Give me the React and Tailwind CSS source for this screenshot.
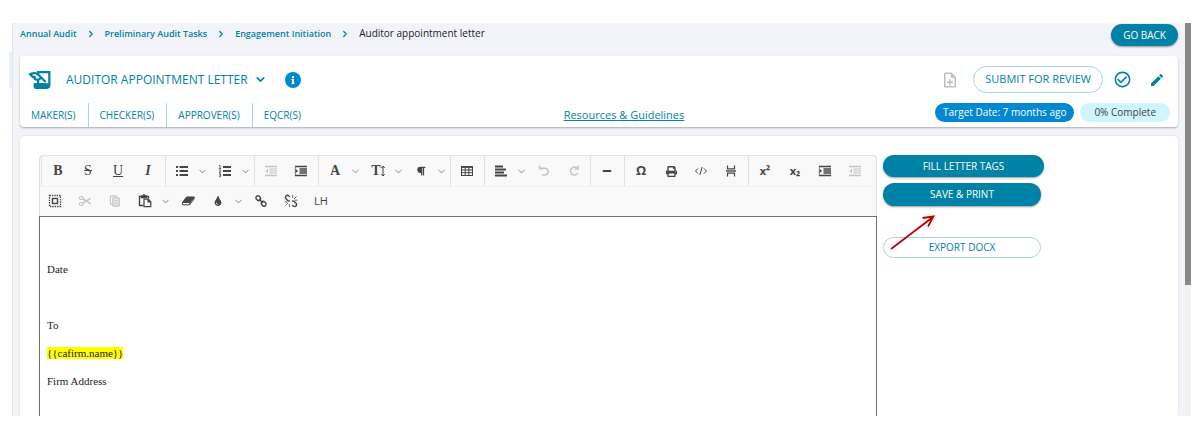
import React, { useState } from "react";
import {
  FaInfo,
  FaMinus,
  FaParagraph,
  FaPrint,
  FaTint,
} from "react-icons/fa";
import {
  MdCheckCircleOutline,
  MdEdit,
  MdOutlineNoteAdd,
} from "react-icons/md";
import { ChevronDown, ChevronRight } from "lucide-react";

const BREADCRUMBS = [
  "Annual Audit",
  "Preliminary Audit Tasks",
  "Engagement Initiation",
];

const ROLES = ["MAKER(S)", "CHECKER(S)", "APPROVER(S)", "EQCR(S)"];

const Svg = ({ children, size = 14, width = 1.2 }) => (
  <svg
    width={size}
    height={size}
    viewBox="0 0 14 14"
    fill="none"
    stroke="currentColor"
    strokeWidth={width}
  >
    {children}
  </svg>
);

const Letter = ({ children, className = "font-bold" }) => (
  <span className={`font-['Liberation_Serif',serif] text-sm leading-4 ${className}`}>
    {children}
  </span>
);

const LetterLogo = () => (
  <svg width="23" height="20" viewBox="1 3.5 20.5 17" fill="currentColor">
    <path d="M9 4v1.380c-.83-.33-1.720-.5-2.610-.5-1.790 0-3.580.680-4.950 2.050l3.330 3.330h1.110v1.110c.86.86 1.980 1.310 3.110 1.360V15H6v3c0 1.100.9 2 2 2h10c1.660 0 3-1.340 3-3V4H9zm-1.110 6.410V8.260H5.610L4.570 7.220a5.070 5.070 0 0 1 1.820-.34c1.340 0 2.590.52 3.540 1.460l1.410 1.410-.2.2a2.700 2.700 0 0 1-1.920.8c-.47 0-.93-.12-1.330-.34zM19 17c0 .55-.45 1-1 1s-1-.45-1-1v-2h-6v-2.590c.57-.23 1.100-.57 1.560-1.030l.2-.2L15.590 14H17v-1.410l-6-5.970V6h8v11z" />
    <path d="M7 15h12.500v3l-1.500 1H8z" />
  </svg>
);

const BulletListIcon = () => (
  <Svg width={2}>
    <path d="M1 3h2M1 7h2M1 11h2M4.500 3H13M4.500 7H13M4.500 11H13" />
  </Svg>
);

const OrderedListIcon = () => (
  <Svg>
    <path d="M5 3h8M5 7h8M5 11h8" strokeWidth="1.8" />
    <path d="M1 1.500h1v3M.8 4.500h2.400M1 6h1.600v1L1 8.300h2M1 9.800h1.600v3H1M1.400 11.300h1.200" strokeWidth=".8" />
  </Svg>
);

const IndentIcon = () => (
  <Svg>
    <path d="M1 2.500h12M1 11.500h12" strokeWidth="1.600" />
    <path d="M5.500 5H13M5.500 7H13M5.500 9H13" strokeWidth="1.500" />
    <path d="M1.500 4.800v4.400L4 7z" fill="currentColor" stroke="none" />
    <path d="M1.300 2.500v9" strokeWidth=".6" />
  </Svg>
);

const OutdentIcon = () => (
  <Svg>
    <path d="M1 2.500h12M1 11.500h12" strokeWidth="1.400" />
    <path d="M5.500 5H13M5.500 7H13M5.500 9H13" strokeWidth="1.200" />
    <path d="M4 4.800v4.400L1.500 7z" fill="currentColor" stroke="none" />
  </Svg>
);

const TableIcon = () => (
  <Svg width={1}>
    <rect x="1.500" y="2.500" width="11" height="9" />
    <path d="M1.500 3h11" strokeWidth="1.800" />
    <path d="M1.500 6h11M1.500 8.700h11M5.200 2.500v9M8.800 2.500v9" />
  </Svg>
);

const AlignIcon = () => (
  <Svg width={1.8}>
    <path d="M1 2.500h8M1 5.500h11M1 8.500h9M1 11.500h12" />
  </Svg>
);

const LineHeightIcon = () => (
  <span className="flex items-center">
    <Letter>T</Letter>
    <svg width="4" height="12" viewBox="0 0 4 12" fill="none" stroke="currentColor" strokeWidth="1">
      <path d="M2 1v10M.3 3 2 1l1.700 2M.3 9 2 11l1.700-2" />
    </svg>
  </span>
);

const UndoIcon = () => (
  <Svg width={1.5}>
    <path d="M3 4.200h4.800a3.400 3.400 0 1 1 0 6.800H5" />
    <path d="M2.600 1.500v3.200h3.600" />
  </Svg>
);

const RedoIcon = () => (
  <Svg width={1.5}>
    <path d="M10.400 4.300A4 4 0 1 0 11 9" />
    <path d="M11.300 1.500v3.400H7.800" />
  </Svg>
);

const SourceIcon = () => (
  <Svg width={1}>
    <path d="M4 4.500 1.500 7 4 9.500M10 4.500 12.500 7 10 9.500M8.200 3 5.800 11" />
  </Svg>
);

const PageBreakIcon = () => (
  <Svg>
    <path d="M3.500 1.500v3.300h7V1.500M3.500 12.500V9.200h7v3.300" />
    <path d="M2 7h10" strokeWidth="1.400" />
  </Svg>
);

const SelectAllIcon = () => (
  <Svg>
    <rect x="1.500" y="1.500" width="11" height="11" strokeDasharray="1.400 1" strokeWidth="1.300" />
    <rect x="4.500" y="4.500" width="5" height="5" strokeWidth="1.400" />
  </Svg>
);

const CutIcon = () => (
  <Svg>
    <ellipse cx="3.200" cy="4" rx="2" ry="1.500" />
    <ellipse cx="3.200" cy="10" rx="2" ry="1.500" />
    <path d="m5 5 7.600 4.600M5 9l7.600-4.600" strokeWidth="1.500" />
  </Svg>
);

const CopyIcon = () => (
  <Svg>
    <path d="M4.500 10.300H3.300a1 1 0 0 1-1-1V2.800a1 1 0 0 1 1-1h4.500a1 1 0 0 1 1 1" />
    <rect x="4.800" y="3.800" width="6.400" height="8.400" rx=".8" fill="currentColor" fillOpacity=".25" />
    <path d="M6.300 6.500h3.400M6.300 8.300h3.400M6.300 10.100h3.400" strokeWidth=".8" />
  </Svg>
);

const PasteIcon = () => (
  <Svg>
    <path d="M5.500 11.500h-4v-9h2M8.500 2.500h2v2" strokeWidth="1.400" />
    <path d="M3.500 3.600V1.800h1.300L6 .6l1.200 1.200h1.300v1.800z" fill="currentColor" />
    <path d="M6 5.200h4.200l2.600 2.500v5H6zM10 5.200v2.700h2.800" strokeWidth="1.200" />
  </Svg>
);

const EraserIcon = () => (
  <Svg width={1}>
    <path d="M5.500 3h7.800L9.200 8.500H1.500z" fill="currentColor" />
    <path d="M1.500 8.500v2.300h7L13 5.200V3M9 8.500l-.5 2.300" />
  </Svg>
);

const LinkIcon = () => (
  <Svg width={1.4}>
    <rect x="1.800" y="2.200" width="5" height="4" rx="1.900" transform="rotate(45 4.300 4.200)" />
    <rect x="7.200" y="7.800" width="5" height="4" rx="1.900" transform="rotate(45 9.700 9.800)" />
    <path d="m5 5 4 4" />
  </Svg>
);

const UnlinkIcon = () => (
  <Svg width={1.3}>
    <path d="M5.800 2.800 4.900 2A2 2 0 0 0 2 4.800l1.700 1.700a2 2 0 0 0 2.400.3M8.200 11.200l.9.800A2 2 0 0 0 12 9.200l-1.700-1.700a2 2 0 0 0-2.400-.3" />
    <path d="M8.600 4V1M10 5l2.600-2.600M10.500 6.200h3M5.400 10v3M4 9l-2.600 2.600M3.500 7.900h-3" strokeWidth=".8" />
  </Svg>
);

const TOOLBAR_GROUPS = [
  [
    { label: "Bold", icon: <Letter>B</Letter> },
    { label: "Strikethrough", icon: <Letter className="line-through">S</Letter> },
    { label: "Underline", icon: <Letter className="underline">U</Letter> },
    { label: "Italic", icon: <Letter className="font-bold italic">I</Letter> },
  ],
  [
    { label: "Bullet list", icon: <BulletListIcon />, menu: true },
    { label: "Numbered list", icon: <OrderedListIcon />, menu: true },
  ],
  [
    { label: "Outdent", icon: <OutdentIcon />, disabled: true },
    { label: "Indent", icon: <IndentIcon /> },
  ],
  [
    { label: "Font", icon: <Letter>A</Letter>, menu: true },
    { label: "Font size", icon: <LineHeightIcon />, menu: true },
    { label: "Paragraph", icon: <FaParagraph size={10} />, menu: true },
  ],
  [{ label: "Table", icon: <TableIcon /> }],
  [
    { label: "Align", icon: <AlignIcon />, menu: true },
    { label: "Undo", icon: <UndoIcon />, disabled: true },
    { label: "Redo", icon: <RedoIcon />, disabled: true },
  ],
  [{ label: "Horizontal line", icon: <FaMinus size={10} /> }],
  [
    { label: "Symbol", icon: <span className="text-[13px] font-bold">Ω</span> },
    { label: "Print", icon: <FaPrint size={11} /> },
    { label: "Source", icon: <SourceIcon /> },
    { label: "Page break", icon: <PageBreakIcon /> },
  ],
  [
    {
      label: "Superscript",
      icon: <span className="text-[11px] font-bold">x²</span>,
    },
    {
      label: "Subscript",
      icon: <span className="text-[11px] font-bold">x₂</span>,
    },
    { label: "Indent first line", icon: <IndentIcon /> },
    { label: "Outdent first line", icon: <OutdentIcon />, disabled: true },
  ],
];

const CLIPBOARD_TOOLS = [
  { label: "Select all", icon: <SelectAllIcon /> },
  { label: "Cut", icon: <CutIcon />, disabled: true },
  { label: "Copy", icon: <CopyIcon />, disabled: true },
  { label: "Paste", icon: <PasteIcon />, menu: true },
  { label: "Clear format", icon: <EraserIcon /> },
  { label: "Color", icon: <FaTint size={10} />, menu: true },
  { label: "Link", icon: <LinkIcon /> },
  { label: "Unlink", icon: <UnlinkIcon /> },
  { label: "Letterhead", icon: <span className="text-[11px]">LH</span> },
];

const ToolButton = ({ label, icon, menu, disabled }) => (
  <>
    <button
      aria-label={label}
      disabled={disabled}
      className="flex h-[30px] w-[30px] items-center justify-center hover:bg-gray-200 disabled:text-[#c4c4c4]"
    >
      {icon}
    </button>
    {menu && (
      <button
        aria-label={`${label} options`}
        className="flex h-[30px] w-[13px] items-center text-[#808080]"
      >
        <ChevronDown size={11} strokeWidth={2} />
      </button>
    )}
  </>
);

const Toolbar = () => (
  <div className="rounded-t border border-b-0 border-[#e2e2e2] bg-[#f9f9f9] text-[#454545]">
    <div className="flex flex-wrap pl-px shadow-[0_1px_0_#f2f2f2]">
      {TOOLBAR_GROUPS.map((group, i) => (
        <div
          key={i}
          className={`flex border-l border-[#e2e2e2] pl-px ${
            group.some((tool) => tool.menu) ? "pr-px" : "pr-[2px]"
          }`}
        >
          {group.map((tool) => (
            <ToolButton key={tool.label} {...tool} />
          ))}
        </div>
      ))}
    </div>
    <div className="flex flex-wrap">
      {CLIPBOARD_TOOLS.map((tool) => (
        <ToolButton key={tool.label} {...tool} />
      ))}
    </div>
  </div>
);

const Header = () => (
  <header className="rounded bg-white text-[#0082a6] shadow-[0_1px_2px_rgba(0,0,0,0.3)]">
    <div className="flex h-[47px] items-center pr-[13px] pl-2">
      <LetterLogo />
      <h1 className="ml-[15px] text-xs">AUDITOR APPOINTMENT LETTER</h1>
      <button aria-label="Change letter" className="ml-[6px]">
        <ChevronDown size={13} strokeWidth={3} />
      </button>
      <button
        aria-label="Information"
        className="ml-[18px] flex h-4 w-4 items-center justify-center rounded-full bg-[#0288d1] text-white"
      >
        <FaInfo size={8} />
      </button>
      <div className="ml-auto flex items-center">
        <button aria-label="Add note" disabled className="text-[#bdbdbd]">
          <MdOutlineNoteAdd size={18} />
        </button>
        <button className="ml-[14px] h-[27px] rounded-full border border-[#a6d5e1] px-[11px] text-[11px]">
          SUBMIT FOR REVIEW
        </button>
        <button aria-label="Mark complete" className="ml-[10px]">
          <MdCheckCircleOutline size={19} />
        </button>
        <button aria-label="Edit" className="ml-[17px]">
          <MdEdit size={16} />
        </button>
      </div>
    </div>
    <div className="flex h-6 items-center justify-between text-[10px]">
      <div className="flex self-stretch">
        {ROLES.map((role) => (
          <button
            key={role}
            className="border-r border-[#a6d5e1] pr-3 pl-[11px] last:border-r-0"
          >
            {role}
          </button>
        ))}
      </div>
      <a href="#resources" className="text-[11px] underline">
        Resources &amp; Guidelines
      </a>
      <div className="mb-[5px] flex gap-[6px] pr-2">
        <span className="rounded-full bg-[#0288d1] px-2 leading-[19px] text-white">
          Target Date: 7 months ago
        </span>
        <span className="rounded-full bg-[#d0f5ff] px-[14px] leading-[19px] text-[#3b4448]">
          0% Complete
        </span>
      </div>
    </div>
  </header>
);

const LetterBody = () => (
  <div
    contentEditable
    suppressContentEditableWarning
    role="textbox"
    aria-label="Letter"
    className="flex-1 space-y-3 border border-b-0 border-[#6f6f6f] px-[7px] pt-4 font-['Liberation_Serif',serif] text-[11px] leading-4 text-[#222222] outline-none"
  >
    <p>&nbsp;</p>
    <p>Date</p>
    <p>&nbsp;</p>
    <p>To</p>
    <p>
      <span className="bg-[#ffff00]">{"{{cafirm.name}}"}</span>
    </p>
    <p>Firm Address</p>
  </div>
);

const Actions = () => (
  <div className="relative flex w-[295px] shrink-0 flex-col items-start text-[10px]">
    <button className="h-[22px] w-[161px] rounded-full bg-[#0082a6] text-white shadow-[0_1px_2px_rgba(0,0,0,0.4)]">
      FILL LETTER TAGS
    </button>
    <button className="mt-[6px] h-[23px] w-[158px] rounded-full bg-[#0082a6] text-white shadow-[0_1px_2px_rgba(0,0,0,0.4)]">
      SAVE &amp; PRINT
    </button>
    <button className="mt-[31px] h-[21px] w-[158px] rounded-full border border-[#a6d5e1] text-[#0082a6]">
      EXPORT DOCX
    </button>
    <svg
      className="absolute top-[58px] left-[6px]"
      width="48"
      height="40"
      viewBox="0 0 48 40"
      fill="none"
      stroke="#c00000"
      strokeWidth="1.8"
    >
      <path d="M2 36 44 4M33.500 5 44.500 3.500 39 13.500" />
    </svg>
  </div>
);

const App = () => {
  const [current] = useState("Auditor appointment letter");

  return (
    <div className="flex h-screen overflow-hidden bg-white pt-[23px] pr-[13px] pb-[29px] pl-[9px] font-['Open_Sans','Noto_Sans',sans-serif] text-[#222222]">
      {/* Sidebar edge */}
      <div className="mt-[29px] h-9 w-[3px] bg-[#eaf4f7]" />

      <main className="flex min-w-0 flex-1 flex-col overflow-hidden border-l border-[#e4e5ea] bg-[#f3f4fa] pr-[7px] pl-[7px]">
        {/* Breadcrumbs */}
        <div className="flex h-[33px] shrink-0 items-start justify-between">
          <nav className="flex items-center text-[10px] leading-[21px]">
            {BREADCRUMBS.map((crumb) => (
              <React.Fragment key={crumb}>
                <a href="#crumb" className="text-[9px] font-semibold text-[#0082a6]">
                  {crumb}
                </a>
                <ChevronRight size={10} strokeWidth={3} className="mx-[9px] text-[#0082a6]" />
              </React.Fragment>
            ))}
            <span>{current}</span>
          </nav>
          <button className="mt-px h-[22px] rounded-full bg-[#0082a6] px-[12px] text-[10px] text-white shadow-[0_1px_2px_rgba(0,0,0,0.4)]">
            GO BACK
          </button>
        </div>

        <Header />

        {/* Editor */}
        <section className="mt-[9px] flex flex-1 gap-[6px] rounded-t bg-white pt-[19px] pl-[19px] shadow-[0_0_2px_rgba(0,0,0,0.15)]">
          <div className="flex min-w-0 flex-1 flex-col">
            <Toolbar />
            <LetterBody />
          </div>
          <Actions />
        </section>
      </main>

      {/* Scrollbar */}
      <div className="w-[6px] bg-[#f1f1f1]">
        <div className="h-2/3 bg-[#888888]" />
      </div>
    </div>
  );
};

export default App;
